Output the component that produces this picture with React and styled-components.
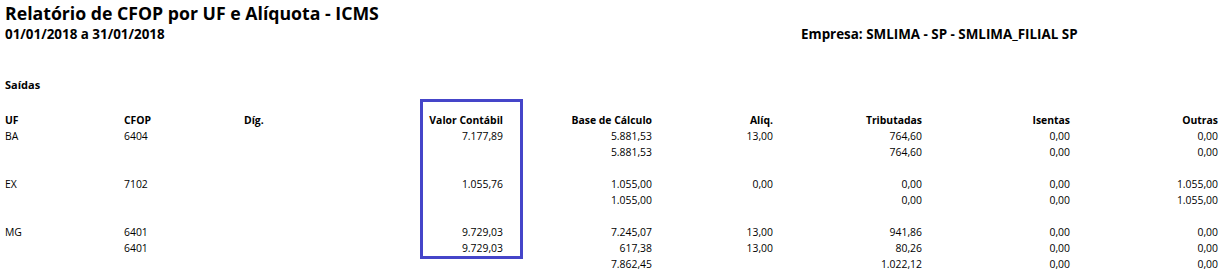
import React from 'react';
import styled, { createGlobalStyle } from 'styled-components';

const GlobalStyle = createGlobalStyle`
  html, body {
    margin: 0;
    padding: 0;
    background: #fff;
  }
  body {
    font-family: "Open Sans", "Noto Sans", sans-serif;
    color: #000;
  }
`;

const columns = [
  { key: 'uf', label: 'UF', align: 'left' },
  { key: 'cfop', label: 'CFOP', align: 'left' },
  { key: 'dig', label: 'Díg.', align: 'left' },
  { key: 'valor', label: 'Valor Contábil', align: 'right' },
  { key: 'base', label: 'Base de Cálculo', align: 'right' },
  { key: 'aliq', label: 'Alíq.', align: 'right' },
  { key: 'trib', label: 'Tributadas', align: 'right' },
  { key: 'isentas', label: 'Isentas', align: 'right' },
  { key: 'outras', label: 'Outras', align: 'right' },
];

const rows = [
  ['BA', '6404', '', '7.177,89', '5.881,53', '13,00', '764,60', '0,00', '0,00'],
  ['', '', '', '', '5.881,53', '', '764,60', '0,00', '0,00'],
  null,
  ['EX', '7102', '', '1.055,76', '1.055,00', '0,00', '0,00', '0,00', '1.055,00'],
  ['', '', '', '', '1.055,00', '', '0,00', '0,00', '1.055,00'],
  null,
  ['MG', '6401', '', '9.729,03', '7.245,07', '13,00', '941,86', '0,00', '0,00'],
  ['', '6401', '', '9.729,03', '617,38', '13,00', '80,26', '0,00', '0,00'],
  ['', '', '', '', '7.862,45', '', '1.022,12', '0,00', '0,00'],
];

const Page = styled.div`
  padding: 3px 10px 0 5px;
`;

const Title = styled.h1`
  margin: 0;
  font-size: 17.7px;
  line-height: 20px;
  font-weight: 700;
`;

const SubHeader = styled.div`
  display: grid;
  grid-template-columns: 796px 1fr;
  margin-top: 2px;
  font-size: 13.4px;
  line-height: 18px;
  font-weight: 700;
`;

const Section = styled.div`
  margin-top: 34px;
  font-size: 11px;
  line-height: 16px;
  font-weight: 700;
`;

const Table = styled.div`
  position: relative;
  margin-top: 19px;
  font-size: 10.4px;
`;

const Row = styled.div`
  display: grid;
  grid-template-columns: 119px 120px 120px 139px 149px 121px 149px 148px 148px;
  height: 16px;
  line-height: 16px;
  font-weight: ${(p) => (p.$head ? 700 : 400)};
`;

const Cell = styled.div`
  text-align: ${(p) => p.$align};
  white-space: nowrap;
`;

const Highlight = styled.div`
  position: absolute;
  left: 415px;
  top: -13px;
  width: 97px;
  height: 154px;
  border: 3px solid #4545c9;
  pointer-events: none;
`;

export default function App() {
  return (
    <>
      <GlobalStyle />
      <Page>
        <Title>Relatório de CFOP por UF e Alíquota - ICMS</Title>
        <SubHeader>
          <span>01/01/2018 a 31/01/2018</span>
          <span>Empresa: SMLIMA - SP - SMLIMA_FILIAL SP</span>
        </SubHeader>
        <Section>Saídas</Section>
        <Table>
          <Row $head>
            {columns.map((c) => (
              <Cell key={c.key} $align={c.align}>{c.label}</Cell>
            ))}
          </Row>
          {rows.map((r, i) => (
            <Row key={i}>
              {r &&
                r.map((v, j) => (
                  <Cell key={j} $align={columns[j].align}>{v}</Cell>
                ))}
            </Row>
          ))}
          <Highlight />
        </Table>
      </Page>
    </>
  );
}
